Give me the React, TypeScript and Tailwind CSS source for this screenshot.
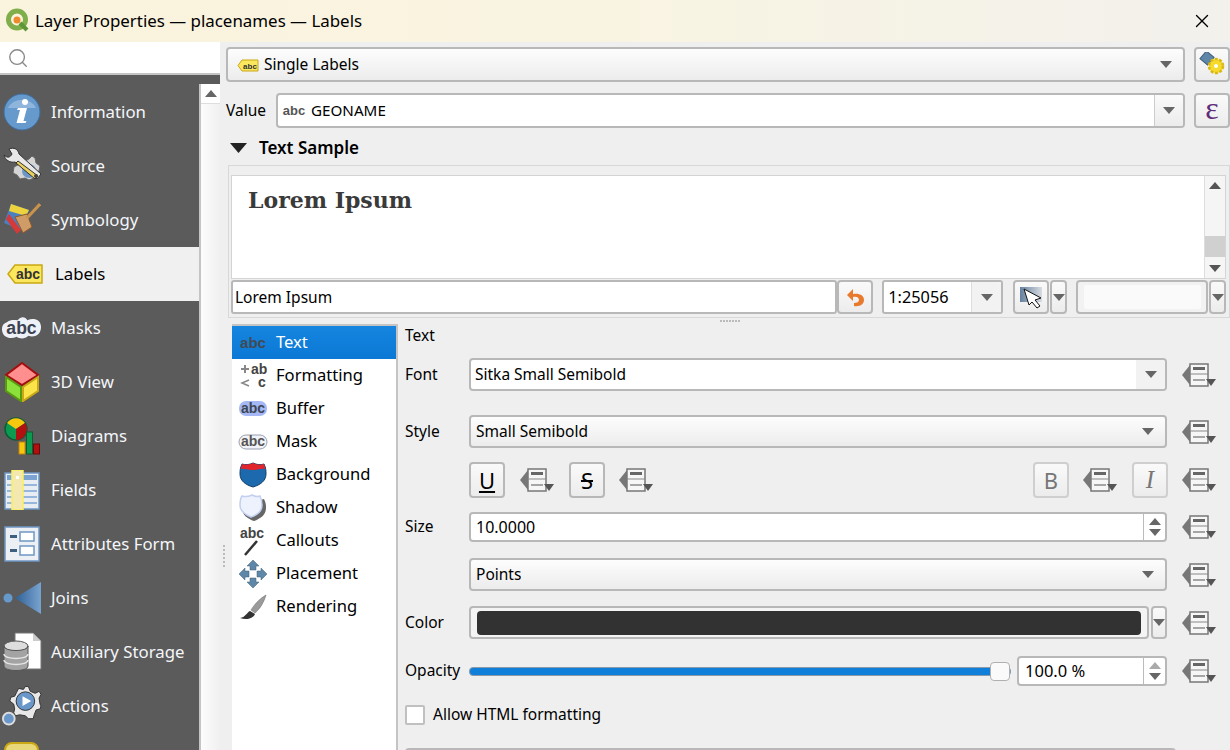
import type { ReactNode } from "react";
import { Search, X } from "lucide-react";

const ABC = ({ fill = "#444", size = 13, y = 14, x = 12 }: { fill?: string; size?: number; y?: number; x?: number }) => (
  <text x={x} y={y} textAnchor="middle" fontFamily="Liberation Sans" fontWeight="700" fontSize={size} fill={fill}>
    abc
  </text>
);

const Arrow = ({ color = "#666" }: { color?: string }) => (
  <svg width="12" height="7" viewBox="0 0 12 7" className="shrink-0">
    <polygon points="0,0 12,0 6,7" fill={color} />
  </svg>
);

const ArrowUp = ({ color = "#666" }: { color?: string }) => (
  <svg width="12" height="7" viewBox="0 0 12 7" className="shrink-0">
    <polygon points="0,7 12,7 6,0" fill={color} />
  </svg>
);

const DataDefined = () => (
  <svg width="34" height="24" viewBox="0 0 34 24" className="shrink-0">
    <polygon points="0,12 8,2 8,22" fill="#777" />
    <rect x="8" y="1" width="18" height="22" fill="#f6f6f6" stroke="#777" strokeWidth="1.5" />
    <rect x="11" y="4" width="12" height="3" fill="#666" />
    <line x1="8" y1="11" x2="26" y2="11" stroke="#888" />
    <line x1="11" y1="17" x2="23" y2="17" stroke="#555" />
    <polygon points="24,16 34,16 29,23" fill="#555" />
  </svg>
);

const sideIcons: Record<string, ReactNode> = {
  Information: (
    <svg width="38" height="38" viewBox="0 0 38 38">
      <circle cx="19" cy="19" r="18" fill="#6699cc" stroke="#3f6ea3" />
      <path d="M5 15a15 13 0 0 1 28 0z" fill="#8fb5dc" />
      <circle cx="22" cy="9" r="3" fill="#fff" />
      <path d="M15 15h9l-3.500 13h3l-1 2h-9l3.500-13h-3z" fill="#fff" />
    </svg>
  ),
  Source: (
    <svg width="38" height="38" viewBox="0 0 38 38">
      <path d="M26 12l3-3 3 2 1 5 4 3-1 5-4 2-1 5-5 2-4-2-5 1-3-4-4-2 1-6z" fill="#d5d5d5" stroke="#666" />
      <circle cx="26" cy="24" r="7" fill="#6d97c6" />
      <path d="M1 8c3 3 6 3 8-1L6 2c5-2 9 0 10 5l22 20-4 5L12 15C7 16 2 13 1 8z" fill="#e8e8e8" stroke="#333" />
      <path d="M15 14l20 15-3 3-19-16z" fill="#e8cf5c" stroke="#333" />
      <circle cx="33" cy="29" r="2" fill="#444" />
    </svg>
  ),
  Symbology: (
    <svg width="38" height="34" viewBox="0 0 38 34">
      <polygon points="8,1 26,7 18,27 1,20" fill="#4a7fc0" />
      <polygon points="8,1 26,7 23,13 6,8" fill="#ecd23c" />
      <polygon points="3,16 14,31 18,27 6,11" fill="#d43a3a" />
      <polygon points="12,14 24,11 29,24 20,30" fill="#cf9b66" stroke="#8a5a2b" />
      <line x1="24" y1="15" x2="37" y2="1" stroke="#c9934c" strokeWidth="3" />
    </svg>
  ),
  Labels: (
    <svg width="36" height="20" viewBox="0 0 36 20">
      <polygon points="1,10 8,1 35,1 35,19 8,19" fill="#fbe75e" stroke="#c9a814" strokeWidth="1.500" />
      <ABC x={21} y={15} size={14} fill="#333" />
    </svg>
  ),
  Masks: (
    <svg width="42" height="26" viewBox="0 0 42 26">
      <path d="M6 7c4-3 8-2 11-2 3-4 8-4 10 0 6-3 14-1 14 7 0 9-8 11-13 9-4 4-9 3-12 1-6 3-15 1-15-8 0-4 2-6 5-7z" fill="#eef1f8" />
      <ABC x={21} y={19} size={18} fill="#3b4250" />
    </svg>
  ),
  "3D View": (
    <svg width="36" height="40" viewBox="0 0 36 40">
      <polygon points="18,1 34,13 18,23 2,13" fill="#ff8f8f" stroke="#a30f0f" strokeWidth="2" />
      <polygon points="2,15 17,25 17,39 2,29" fill="#8be03a" stroke="#5a9a10" strokeWidth="2" />
      <polygon points="34,15 19,25 19,39 34,29" fill="#fbe34a" stroke="#c9a814" strokeWidth="2" />
    </svg>
  ),
  Diagrams: (
    <svg width="36" height="38" viewBox="0 0 36 38">
      <circle cx="12" cy="12" r="11" fill="#0c9a50" stroke="#0d5b33" strokeWidth="1.500" />
      <path d="M12 12L3 6a11 11 0 0 1 18 0z" fill="#f6c90e" />
      <path d="M12 12l9-6a11 11 0 0 1-9 17z" fill="#b01010" />
      <rect x="15" y="25" width="6" height="12" fill="#f6c90e" stroke="#c5820c" />
      <rect x="22.500" y="15" width="6" height="22" fill="#0c9a50" stroke="#0d5b33" />
      <rect x="29.500" y="27" width="6" height="10" fill="#b01010" stroke="#6d0808" />
    </svg>
  ),
  Fields: (
    <svg width="36" height="40" viewBox="0 0 36 40">
      <rect x="1" y="3" width="34" height="36" fill="#e8edf4" stroke="#6f97c4" strokeWidth="1.500" />
      <rect x="3" y="5" width="30" height="5" fill="#7ba4d2" />
      <path d="M3 15h30M3 21h30M3 27h30M3 33h30" stroke="#7ba4d2" strokeWidth="1.500" />
      <rect x="8" y="0" width="11" height="40" fill="#f2e8b0" stroke="#fbf05a" strokeWidth="1.500" />
      <rect x="12" y="6" width="3" height="3" fill="#fff" />
    </svg>
  ),
  "Attributes Form": (
    <svg width="36" height="36" viewBox="0 0 36 36">
      <rect x="1" y="1" width="34" height="34" fill="#eceff3" stroke="#6f97c4" strokeWidth="1.500" />
      <rect x="6" y="9" width="7" height="3" fill="#3f5f80" />
      <rect x="6" y="23" width="7" height="3" fill="#3f5f80" />
      <rect x="16" y="6" width="14" height="9" fill="#fff" stroke="#6f97c4" strokeWidth="1.500" />
      <rect x="16" y="20" width="14" height="9" fill="#fff" stroke="#6f97c4" strokeWidth="1.500" />
    </svg>
  ),
  Joins: (
    <svg width="40" height="34" viewBox="0 0 40 34">
      <defs>
        <linearGradient id="joinFill" x1="0" x2="1" y1="0" y2="0">
          <stop offset="0" stopColor="#2f5f95" />
          <stop offset="1" stopColor="#79a4d0" />
        </linearGradient>
      </defs>
      <circle cx="6" cy="17" r="4.500" fill="#6699cc" />
      <polygon points="13,17 39,1 39,33" fill="url(#joinFill)" />
    </svg>
  ),
  "Auxiliary Storage": (
    <svg width="40" height="40" viewBox="0 0 40 40">
      <polygon points="13,1 31,1 39,9 39,37 13,37" fill="#fff" stroke="#777" />
      <polygon points="31,1 39,9 31,9" fill="#ccc" />
      <ellipse cx="14" cy="14" rx="12" ry="5" fill="#ddd" stroke="#555" />
      <path d="M2 14v20c0 6 24 6 24 0V14c0 6-24 6-24 0z" fill="#a3a3a3" stroke="#555" />
      <path d="M2 22c0 6 24 6 24 0M2 28c0 6 24 6 24 0" fill="none" stroke="#e4e4e4" strokeWidth="1.500" />
    </svg>
  ),
  Actions: (
    <svg width="42" height="42" viewBox="0 0 42 42">
      <path d="M25 1l3 0 2 5 5 2 4-2 2 3-2 4 1 6 1 2-1 3-4 1-2 5-1 4-5 0-3-3-6-1-4 1-2-3 1-4-1-5-4-3 1-4 4-1 2-4 2-4 5 1z" fill="#e8e8e8" stroke="#333" />
      <circle cx="25" cy="16" r="9.500" fill="#6a97c9" stroke="#333" />
      <polygon points="22,11 31,16 22,21" fill="#fff" />
      <circle cx="8" cy="34" r="6" fill="#6a97c9" stroke="#ddd" strokeWidth="2" />
    </svg>
  ),
};

const listIcons: Record<string, ReactNode> = {
  Text: (
    <svg width="28" height="20" viewBox="0 0 28 20">
      <ABC x={14} y={15} size={15} fill="#424a52" />
    </svg>
  ),
  Formatting: (
    <svg width="28" height="32" viewBox="0 0 28 32" className="my-[-3px]">
      <path d="M2 9h8M6 5v8" stroke="#888" strokeWidth="2" />
      <path d="M10 20l-7 3 7 3" stroke="#888" strokeWidth="1.500" fill="none" />
      <text x="12" y="14" fontFamily="Liberation Sans" fontWeight="700" fontSize="14" fill="#444">ab</text>
      <text x="19" y="27" fontFamily="Liberation Sans" fontWeight="700" fontSize="14" fill="#444">c</text>
    </svg>
  ),
  Buffer: (
    <svg width="30" height="20" viewBox="0 0 30 20">
      <rect x="1" y="2" width="28" height="15" rx="7" fill="#a5b8f5" />
      <ABC x={15} y={14} size={14} fill="#3d4654" />
    </svg>
  ),
  Mask: (
    <svg width="30" height="20" viewBox="0 0 30 20">
      <rect x="1" y="3" width="28" height="14" rx="7" fill="#f2f3f8" stroke="#9a9fb0" />
      <ABC x={15} y={14} size={14} fill="#555" />
    </svg>
  ),
  Background: (
    <svg width="28" height="26" viewBox="0 0 28 26">
      <path d="M3 2c3 1 7 1 11-1 4 2 8 2 11 1 2 4 2 7 2 10 0 7-6 11-13 13C7 23 1 19 1 12c0-3 0-6 2-10z" fill="#1c6aad" stroke="#153f66" />
      <path d="M3 2c3 1 7 1 11-1 4 2 8 2 11 1l1.500 5c-5-1-8 1-13 1S6 6 1.500 7z" fill="#e2242c" />
    </svg>
  ),
  Shadow: (
    <svg width="28" height="28" viewBox="0 0 28 28">
      <path d="M6 5c3 1 6 1 10-1 4 2 6 2 9 1 2 4 2 6 2 9 0 7-6 11-12 13C9 25 3 21 3 14c0-3 1-6 3-9z" fill="#666" />
      <path d="M3 2c3 1 6 1 10-1 4 2 6 2 8 1 2 4 2 6 2 9 0 7-5 10-11 12C7 21 1 18 1 11c0-3 0-6 2-9z" fill="#eef2fd" stroke="#c3cff0" strokeWidth="1.500" />
    </svg>
  ),
  Callouts: (
    <svg width="28" height="34" viewBox="0 0 28 34" className="my-[-1px]">
      <ABC x={13} y={14} size={14} fill="#444" />
      <line x1="6" y1="31" x2="18" y2="17" stroke="#333" strokeWidth="2.500" />
    </svg>
  ),
  Placement: (
    <svg width="30" height="30" viewBox="0 0 30 30">
      <g fill="#5f88a8" stroke="#3f5f7a" strokeWidth="0.500">
        <polygon points="15,1 21,7 18,7 18,11 12,11 12,7 9,7" />
        <polygon points="15,29 21,23 18,23 18,19 12,19 12,23 9,23" />
        <polygon points="1,15 7,9 7,12 11,12 11,18 7,18 7,21" />
        <polygon points="29,15 23,9 23,12 19,12 19,18 23,18 23,21" />
      </g>
    </svg>
  ),
  Rendering: (
    <svg width="28" height="26" viewBox="0 0 28 26">
      <path d="M27 1C20 5 15 11 12 16l4 3c5-4 9-11 11-18z" fill="#9a9a9a" stroke="#666" strokeWidth="0.500" />
      <path d="M11 17c-3 1-4 6-10 7 6 2 13 1 15-4z" fill="#333" />
    </svg>
  ),
};

const sideItems = ["Information", "Source", "Symbology", "Labels", "Masks", "3D View", "Diagrams", "Fields", "Attributes Form", "Joins", "Auxiliary Storage", "Actions"];
const listItems = ["Text", "Formatting", "Buffer", "Mask", "Background", "Shadow", "Callouts", "Placement", "Rendering"];

const Combo = ({ children, className = "" }: { children: ReactNode; className?: string }) => (
  <div className={`flex items-center justify-between border-2 border-[#b8b8b8] rounded-[4px] bg-linear-to-b from-[#fdfdfd] to-[#ececec] pl-[5px] pr-[11px] ${className}`}>
    <span className="truncate">{children}</span>
    <Arrow />
  </div>
);

const ToolButton = ({ children, className = "" }: { children?: ReactNode; className?: string }) => (
  <div className={`flex items-center justify-center shrink-0 border-2 border-[#b8b8b8] rounded-[4px] bg-linear-to-b from-[#fafafa] to-[#ececec] ${className}`}>
    {children}
  </div>
);

const FormRow = ({ label, className = "", children }: { label?: string; className?: string; children: ReactNode }) => (
  <div className={`flex items-center shrink-0 ${className}`}>
    <span className="w-[64px] shrink-0">{label}</span>
    <div className="w-[698px] shrink-0">{children}</div>
    <div className="ml-[15px]">
      <DataDefined />
    </div>
  </div>
);

export default function App() {
  return (
    <div className="w-[1230px] h-[750px] overflow-hidden flex flex-col bg-[#efefef] text-black text-[15.5px] font-['Noto_Sans',sans-serif]">
      <div className="h-[42px] shrink-0 flex items-center justify-between bg-linear-to-r from-[#faf3dd] via-[#f9f4e2] to-[#f2f1ec] pl-[5px] pr-[17px]">
        <div className="flex items-center gap-[5px]">
          <svg width="25" height="25" viewBox="0 0 25 25">
            <circle cx="12" cy="11.500" r="8.500" fill="#fbf3dd" stroke="#7fae4a" strokeWidth="5" />
            <path d="M15 15l7 7" stroke="#5d9636" strokeWidth="4" />
            <circle cx="12" cy="12" r="3.500" fill="#ee8a2e" />
          </svg>
          <span className="text-[16.9px]">Layer Properties — placenames — Labels</span>
        </div>
        <X size={22} strokeWidth={1.5} />
      </div>

      <div className="flex-1 flex min-h-0">
        <aside className="w-[220px] shrink-0 flex flex-col">
          <div className="h-[33px] shrink-0 flex items-center bg-white border-b-2 border-[#c4c4c4] pl-[7px]">
            <Search size={22} strokeWidth={1.5} className="text-[#888]" />
          </div>
          <div className="flex-1 flex min-h-0 relative bg-[#5b5b5b]">
            <div className="w-[199px] shrink-0 flex flex-col pt-[10px] text-[#f4f6fa] text-[16.8px]">
              {sideItems.map((item) => (
                <div key={item} className={`h-[54px] shrink-0 flex items-center ${item === "Labels" ? "bg-[#f0f0f0] text-black" : ""}`}>
                  <div className={`flex justify-center shrink-0 ${item === "Labels" ? "w-[55px] pr-[5px]" : "w-[51px] pr-[9px] pl-[1px]"}`}>{sideIcons[item]}</div>
                  <span>{item}</span>
                </div>
              ))}
              <div className="ml-[4px] mt-[9px] w-[35px] h-[20px] shrink-0 rounded-t-[8px] bg-[#e8d87a] border-2 border-[#c9a814]" />
            </div>
            <div className="flex-1 mt-[9px] bg-linear-to-r from-[#fcfcfc] to-[#f0f0f0] border-l-2 border-[#c4c4c4]">
              <div className="h-[20px] flex items-center justify-center bg-white border-b border-[#ddd]">
                <ArrowUp />
              </div>
            </div>
          </div>
        </aside>

        <main className="flex-1 min-w-0 pl-[6px] flex flex-col relative">
          <div className="absolute left-[3px] top-[503px] flex flex-col gap-[2px]">
            {[0, 1, 2, 3, 4, 5].map((d) => (
              <div key={d} className="w-[2px] h-[2px] bg-[#bbb]" />
            ))}
          </div>

          <div className="flex h-[35px] mt-[5px] shrink-0">
            <Combo className="w-[960px]">
              <span className="flex items-center gap-[5px] pl-[4px] pt-[1px]">
                <svg width="22" height="13" viewBox="0 0 22 13">
                  <polygon points="1,6.500 5,1 21,1 21,12 5,12" fill="#fbe75e" stroke="#c9a814" />
                  <ABC x={13} y={10} size={8} fill="#333" />
                </svg>
                Single Labels
              </span>
            </Combo>
            <ToolButton className="ml-[9px] w-[36px]">
              <svg width="26" height="26" viewBox="0 0 26 26">
                <rect x="3" y="1" width="10" height="10" transform="rotate(40 8 6)" fill="#5d86a8" stroke="#3f5f7a" />
                <circle cx="17" cy="14" r="7" fill="#f6da2c" stroke="#d8b814" strokeWidth="2.500" strokeDasharray="3 1.500" />
                <circle cx="17" cy="14" r="2" fill="#fff" />
              </svg>
            </ToolButton>
          </div>

          <div className="flex items-center h-[35px] mt-[11px] shrink-0">
            <span className="w-[50px] shrink-0">Value</span>
            <div className="w-[910px] h-full flex border-2 border-[#b8b8b8] rounded-[4px] bg-white">
              <div className="flex-1 flex items-center gap-[4px] pl-[4px]">
                <svg width="25" height="14" viewBox="0 0 25 14">
                  <ABC x={12} y={11} size={13} fill="#555" />
                </svg>
                <span className="text-[15.2px]">GEONAME</span>
              </div>
              <div className="w-[29px] flex items-center justify-center border-l border-[#ccc] bg-linear-to-b from-[#fafafa] to-[#ececec] rounded-r-[3px]">
                <Arrow />
              </div>
            </div>
            <ToolButton className="ml-[9px] w-[36px] h-full text-[#5f2d7a] text-[32px] leading-none pb-[5px] font-['Liberation_Serif',serif]">ε</ToolButton>
          </div>

          <div className="flex items-center h-[20px] mt-[10px] shrink-0 font-semibold text-[17px]">
            <svg width="17" height="10" viewBox="0 0 17 10" className="ml-[4px] mr-[12px]">
              <polygon points="0,0 17,0 8.500,10" fill="#222" />
            </svg>
            Text Sample
          </div>

          <div className="h-[153px] mt-[7px] ml-[2px] shrink-0 border border-[#d8d8d8] pt-[9px] pl-[2px] pr-[3px]">
            <div className="h-[104px] flex border border-[#d4d4d4] bg-white">
              <div className="flex-1 pl-[16px] pt-[9px] text-[22px] leading-[30px] font-bold text-[#3a3a3a] font-['DejaVu_Serif',serif]">Lorem Ipsum</div>
              <div className="w-[21px] flex flex-col items-center justify-between py-[6px] border-l border-[#ddd] bg-[#f5f5f5] relative">
                <ArrowUp color="#555" />
                <div className="absolute left-0 right-0 top-[60px] h-[21px] bg-[#d0d0d0]" />
                <Arrow color="#555" />
              </div>
            </div>
            <div className="flex h-[34px] mt-[1px]">
              <div className="w-[607px] flex items-center border-2 border-[#b8b8b8] rounded-[3px] bg-white pl-[2px] pt-[1px]">Lorem Ipsum</div>
              <ToolButton className="w-[36px]">
                <svg width="20" height="20" viewBox="0 0 20 20">
                  <path d="M8 2L2 8l6 6v-4c3-1 6 0 6 3 0 2-2 3-5 3v3c6 1 10-2 10-6 0-5-5-7-11-6z" fill="#e87a2e" />
                </svg>
              </ToolButton>
              <div className="ml-[9px] w-[121px] flex border-2 border-[#b8b8b8] rounded-[3px] bg-white text-[16.3px]">
                <div className="flex-1 flex items-center pl-[4px]">1:25056</div>
                <div className="w-[30px] flex items-center justify-center border-l border-[#ddd] bg-[#f2f2f2] rounded-r-[3px]">
                  <Arrow />
                </div>
              </div>
              <ToolButton className="ml-[10px] w-[36px]">
                <svg width="24" height="23" viewBox="0 0 24 23">
                  <defs>
                    <linearGradient id="canvasFill" x1="0" x2="1" y1="0" y2="0">
                      <stop offset="0" stopColor="#64809f" />
                      <stop offset="1" stopColor="#d8dce2" />
                    </linearGradient>
                  </defs>
                  <rect x="1" y="1" width="22" height="15" fill="url(#canvasFill)" />
                  <polygon points="5,3 22,12 16,14 21,20 18,22 13,16 10,19" fill="#fff" stroke="#111" />
                </svg>
              </ToolButton>
              <ToolButton className="ml-[1px] w-[17px]">
                <Arrow />
              </ToolButton>
              <div className="ml-[9px] w-[132px] flex items-center justify-center border-2 border-[#b8b8b8] rounded-[4px] bg-[#f2f2f2]">
                <div className="w-[117px] h-[24px] bg-[#fafafa] rounded-[2px]" />
              </div>
              <ToolButton className="ml-[1px] w-[17px]">
                <Arrow />
              </ToolButton>
            </div>
          </div>

          <div className="h-[6px] shrink-0 flex justify-center items-center gap-[1px] pl-[3px]">
            {[0, 1, 2, 3, 4, 5, 6].map((d) => (
              <div key={d} className="w-[2px] h-[2px] bg-[#bbb]" />
            ))}
          </div>

          <div className="flex-1 min-h-0 flex">
            <div className="ml-[6px] w-[166px] shrink-0 bg-white border-t-2 border-r-2 border-[#c4c4c4] flex flex-col text-[16.6px]">
              {listItems.map((item) => (
                <div key={item} className={`h-[33px] shrink-0 flex items-center ${item === "Text" ? "bg-linear-to-b from-[#1585e0] to-[#0a78d4] text-white" : ""}`}>
                  <div className="w-[44px] shrink-0 flex justify-center pr-[3px]">{listIcons[item]}</div>
                  <span>{item}</span>
                </div>
              ))}
            </div>

            <div className="flex-1 min-w-0 pl-[7px] flex flex-col">
              <div className="h-[20px] mt-[2px] shrink-0 flex items-center">Text</div>
              <FormRow label="Font" className="h-[33px] mt-[12px]">
                <div className="h-[33px] flex border-2 border-[#b8b8b8] rounded-[4px] bg-white">
                  <div className="flex-1 flex items-center pl-[4px]">Sitka Small Semibold</div>
                  <div className="w-[29px] flex items-center justify-center bg-[#f2f2f2] rounded-r-[3px]">
                    <Arrow />
                  </div>
                </div>
              </FormRow>
              <FormRow label="Style" className="h-[33px] mt-[24px]">
                <Combo className="h-[33px]">Small Semibold</Combo>
              </FormRow>

              <div className="flex items-center h-[36px] mt-[14px] pl-[64px] shrink-0">
                <ToolButton className="w-[36px] h-full text-[22px] border-[#a8a8a8]">
                  <span className="underline decoration-[2px] underline-offset-[2px]">U</span>
                </ToolButton>
                <div className="ml-[15px]"><DataDefined /></div>
                <ToolButton className="ml-[15px] w-[36px] h-full text-[22px] border-[#a8a8a8]">
                  <span className="line-through">S</span>
                </ToolButton>
                <div className="ml-[14px]"><DataDefined /></div>
                <ToolButton className="ml-auto w-[36px] h-full text-[22px] text-[#777] border-[#cfcfcf]">B</ToolButton>
                <div className="ml-[14px]"><DataDefined /></div>
                <ToolButton className="ml-[15px] w-[36px] h-full text-[25px] italic text-[#777] font-['Liberation_Serif',serif] border-[#cfcfcf]">I</ToolButton>
                <div className="ml-[14px] mr-[14px]"><DataDefined /></div>
              </div>

              <FormRow label="Size" className="h-[30px] mt-[14px]">
                <div className="h-[30px] flex border-2 border-[#b8b8b8] rounded-[4px] bg-white">
                  <div className="flex-1 flex items-center pl-[5px] text-[16px]">10.0000</div>
                  <div className="w-[22px] flex flex-col items-center justify-center gap-[4px] border-l border-[#bbb]">
                    <ArrowUp />
                    <Arrow />
                  </div>
                </div>
              </FormRow>
              <FormRow className="h-[33px] mt-[16px]">
                <Combo className="h-[33px]">Points</Combo>
              </FormRow>
              <FormRow label="Color" className="h-[33px] mt-[15px]">
                <div className="flex h-[33px]">
                  <div className="flex-1 flex items-center border-2 border-[#b8b8b8] rounded-[4px] bg-[#f4f4f4] px-[6px]">
                    <div className="w-full h-[24px] bg-[#323232] rounded-[4px]" />
                  </div>
                  <ToolButton className="ml-[2px] w-[16px]">
                    <Arrow />
                  </ToolButton>
                </div>
              </FormRow>
              <FormRow label="Opacity" className="h-[30px] mt-[17px]">
                <div className="flex items-center h-[30px]">
                  <div className="flex-1 relative h-[9px] rounded-[4px] bg-[#0f7fd9] border border-[#8a9aa8]">
                    <div className="absolute right-0 top-[-6px] w-[20px] h-[19px] bg-[#fafafa] border border-[#b0b0b0] rounded-[4px]" />
                  </div>
                  <div className="ml-[6px] w-[150px] h-full flex border-2 border-[#b8b8b8] rounded-[4px] bg-white">
                    <div className="flex-1 flex items-center pl-[6px] text-[16.5px]">100.0 %</div>
                    <div className="w-[22px] flex flex-col items-center justify-center gap-[4px] border-l border-[#bbb]">
                      <ArrowUp color="#aaa" />
                      <Arrow />
                    </div>
                  </div>
                </div>
              </FormRow>

              <div className="flex items-center h-[22px] mt-[18px] shrink-0 gap-[8px]">
                <div className="w-[20px] h-[20px] bg-white border-2 border-[#c0c0c0] rounded-[2px]" />
                Allow HTML formatting
              </div>
              <div className="mt-[22px] w-[771px] h-[20px] shrink-0 border-2 border-[#b8b8b8] rounded-[4px] bg-[#f8f8f8]" />
            </div>
          </div>
        </main>
      </div>
    </div>
  );
}
